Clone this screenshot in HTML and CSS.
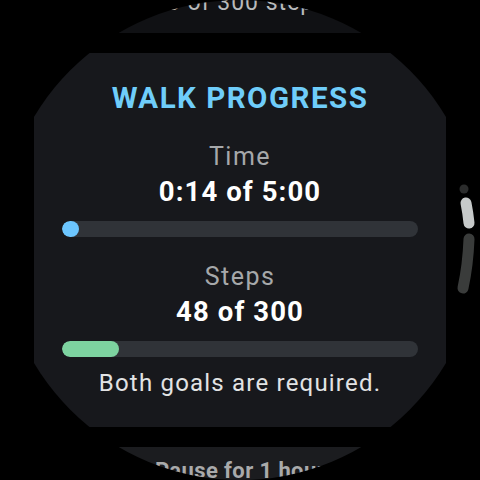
FILE: index.html
```html
<!DOCTYPE html>
<html lang="en">
<head>
  <meta charset="UTF-8">
  <meta name="viewport" content="width=device-width, initial-scale=1.0">
  <title>Walk Progress</title>
  <link rel="stylesheet" href="styles.css">
</head>
<body>
  <div class="screen">
    <div class="list">
      <section class="card card-prev">
        <p class="prev-text">48 of 300 steps</p>
      </section>

      <section class="card card-main">
        <h1 class="title">WALK PROGRESS</h1>

        <div class="goal">
          <p class="goal-label">Time</p>
          <p class="goal-value">0:14 of 5:00</p>
          <div class="track">
            <div class="fill fill-time" style="width: 4.67%"></div>
          </div>
        </div>

        <div class="goal">
          <p class="goal-label">Steps</p>
          <p class="goal-value">48 of 300</p>
          <div class="track">
            <div class="fill fill-steps" style="width: 16%"></div>
          </div>
        </div>

        <p class="note">Both goals are required.</p>
      </section>

      <section class="card card-next">
        <p class="next-text">Pause for 1 hour</p>
      </section>
    </div>

    <!-- scroll position indicator along the bezel -->
    <svg class="scrollbar" width="480" height="480" viewBox="0 0 480 480">
      <circle cx="464" cy="189" r="4.5" fill="#2b2c2c"/>
      <path d="M466 203 Q468 213 469 223" stroke="#c6c9c9" stroke-width="11" stroke-linecap="round" fill="none"/>
      <path d="M469 239 Q468 265 463 288" stroke="#3a3c3b" stroke-width="11" stroke-linecap="round" fill="none"/>
    </svg>
  </div>
</body>
</html>
```

FILE: styles.css
```css
:root {
  --card: #17181c;
  --track: #303338;
  --accent: #6fcdfa;
  --time: #6cc6ff;
  --steps: #7dd3a0;
  --label: #a6a8aa;
}
* {
  box-sizing: border-box;
}
body {
  margin: 0;
  background: #000;
  font-family: Roboto, 'Noto Sans', sans-serif;
}
p, h1 {
  margin: 0;
}
.screen {
  position: relative;
  width: 480px;
  height: 480px;
  border-radius: 50%;
  overflow: hidden;
  background: #000;
}
.list {
  display: flex;
  flex-direction: column;
  align-items: center;
  gap: 20px;
  margin-top: -47px;
}
.card {
  width: 412px;
  background: var(--card);
  border-radius: 26px;
  text-align: center;
}
.card-prev {
  height: 80px;
  display: flex;
  flex-direction: column;
  justify-content: flex-end;
  padding-bottom: 17px;
  background: #101114;
}
.prev-text {
  font-size: 23px;
  line-height: 26px;
  letter-spacing: 1px;
  color: #b9babb;
}
.card-main {
  height: 374px;
  padding: 28px 28px 0;
}
.title {
  font-size: 29.5px;
  line-height: 34px;
  font-weight: 700;
  letter-spacing: 1.5px;
  color: var(--accent);
}
.goal-label {
  font-size: 25px;
  line-height: 30px;
  letter-spacing: 1.5px;
  color: var(--label);
}
.goal-value {
  font-size: 27.5px;
  line-height: 32px;
  font-weight: 700;
  letter-spacing: 1.1px;
  color: #fff;
  margin-top: 4px;
}
.goal:first-of-type {
  margin-top: 27px;
}
.goal + .goal {
  margin-top: 25px;
}
.track {
  height: 16px;
  border-radius: 8px;
  background: var(--track);
  margin-top: 13px;
  overflow: hidden;
}
.fill {
  height: 100%;
  min-width: 16px;
  border-radius: 8px;
}
.fill-time {
  background: var(--time);
}
.fill-steps {
  background: var(--steps);
}
.note {
  font-size: 24px;
  line-height: 28px;
  letter-spacing: 1.2px;
  color: #e2e3e4;
  margin-top: 12px;
}
.card-next {
  height: 80px;
  padding-top: 10px;
  background: #1b1c1f;
}
.next-text {
  font-size: 22px;
  line-height: 28px;
  font-weight: 700;
  letter-spacing: 0.4px;
  color: #a9aaab;
}
.scrollbar {
  position: absolute;
  top: 0;
  left: 0;
}
```
